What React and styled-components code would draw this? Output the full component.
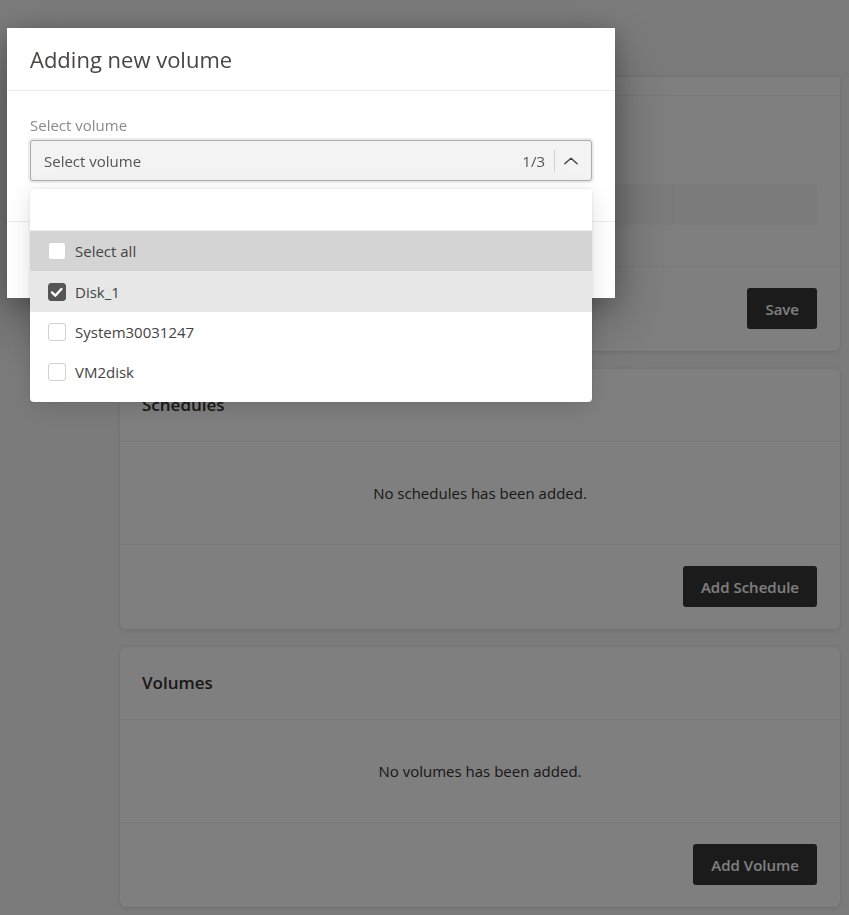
import React, { useState } from "react";
import styled, { createGlobalStyle } from "styled-components";

const GlobalStyle = createGlobalStyle`
  *, *::before, *::after { box-sizing: border-box; }
  body {
    margin: 0;
    background: #f6f6f6;
    color: #323130;
    font-family: "Segoe UI", "Open Sans", "Noto Sans", sans-serif;
    font-size: 15px;
    line-height: 20px;
  }
  button, input { font: inherit; color: inherit; }
`;

const TopBar = styled.header`
  height: 77px;
  border-bottom: 1px solid #ededed;
  background: #f6f6f6;
`;

const Content = styled.main`
  display: flex;
  flex-direction: column;
  gap: 18px;
  padding: 0 9px 7px 120px;
`;

const Card = styled.section`
  background: #fff;
  border-radius: ${(p) => (p.$scrolled ? "0 0 6px 6px" : "6px")};
  box-shadow: 0 1px 4px rgba(0, 0, 0, 0.12);
`;

const CardHeader = styled.div`
  min-height: ${(p) => (p.$scrolled ? "19px" : "73px")};
  display: flex;
  align-items: center;
  padding: 0 22px;
  border-bottom: 1px solid #f2f2f2;
`;

const CardTitle = styled.h2`
  margin: 0;
  font-size: 17px;
  line-height: 24px;
  font-weight: 600;
`;

const EmptyBody = styled.p`
  margin: 0;
  min-height: 102px;
  display: flex;
  align-items: center;
  justify-content: center;
`;

const FieldBody = styled.div`
  padding: 88px 23px 41px 22px;
`;

const DisabledField = styled.input`
  display: block;
  width: 100%;
  height: 41px;
  border: 0;
  border-radius: 4px;
  background: #f6f6f6;
`;

const CardFooter = styled.div`
  display: flex;
  justify-content: flex-end;
  padding: 21px 23px 22px;
  border-top: 1px solid #f2f2f2;
`;

const PrimaryButton = styled.button`
  height: 41px;
  padding: 0 18px;
  border: 0;
  border-radius: 3px;
  background: #363636;
  color: #fff;
  font-weight: 600;
`;

const Overlay = styled.div`
  position: fixed;
  inset: 0;
  padding: 28px 7px;
  background: rgba(0, 0, 0, 0.5);
`;

const Dialog = styled.div`
  max-width: 608px;
  background: #fff;
  box-shadow: 0 26px 58px rgba(0, 0, 0, 0.3), 0 5px 24px rgba(0, 0, 0, 0.24);
`;

const DialogHeader = styled.div`
  padding: 17px 23px;
  border-bottom: 1px solid #ededed;
`;

const DialogTitle = styled.h1`
  margin: 0;
  font-size: 22px;
  line-height: 28px;
  font-weight: 400;
  color: #484644;
`;

const DialogBody = styled.div`
  padding: 24px 23px 40px;
`;

const DialogFooter = styled.div`
  height: 77px;
  border-top: 1px solid #ededed;
`;

const FieldLabel = styled.div`
  padding-bottom: 5px;
  color: #8a8a8a;
`;

const Picker = styled.div`
  position: relative;
`;

const PickerButton = styled.button`
  display: flex;
  align-items: center;
  width: 100%;
  height: 41px;
  padding: 0 13px;
  border: 1px solid #adadad;
  border-radius: 3px;
  background: #f3f3f3;
  box-shadow: 0 0 0 2px rgba(0, 0, 0, 0.08);
  color: #555;
  text-align: left;
`;

const PickerText = styled.span`
  flex: 1;
`;

const PickerArrow = styled.span`
  display: flex;
  align-items: center;
  height: 22px;
  margin-left: 9px;
  padding-left: 9px;
  border-left: 1px solid #d0d0d0;
  color: #3d3d3d;
`;

const Menu = styled.div`
  position: absolute;
  top: calc(100% + 8px);
  left: 0;
  right: 0;
  padding-bottom: 10px;
  overflow: hidden;
  border-radius: 4px;
  background: #fff;
  box-shadow: 0 6px 24px rgba(0, 0, 0, 0.12), 0 0 3px rgba(0, 0, 0, 0.1);
`;

const SearchInput = styled.input`
  display: block;
  width: 100%;
  height: 42px;
  padding: 0 14px;
  border: 0;
  border-bottom: 1px solid #ededed;
  background: #fff;
  outline: 0;
`;

const optionColor = (p) => {
  if (p.$highlighted) return "#d4d4d4";
  return p.$selected ? "#e7e7e7" : "#fff";
};

const Option = styled.label`
  display: flex;
  align-items: center;
  gap: 9px;
  min-height: ${(p) => (p.$selected ? "41px" : "40px")};
  padding: 0 18px;
  color: #444;
  background: ${optionColor};
`;

const CheckHolder = styled.span`
  display: grid;
  width: 18px;
  height: 18px;
  > * {
    grid-area: 1 / 1;
  }
`;

const Checkbox = styled.input`
  appearance: none;
  width: 18px;
  height: 18px;
  margin: 0;
  border: 1px solid #d2d2d2;
  border-radius: 3px;
  background: #fff;
  &:checked {
    border-color: #555;
    background: #555;
  }
`;

const CheckMark = styled.svg`
  pointer-events: none;
`;

function VolumeOption({ name, checked, highlighted, onToggle }) {
  return (
    <Option $highlighted={highlighted} $selected={checked}>
      <CheckHolder>
        <Checkbox type="checkbox" checked={checked} onChange={onToggle} />
        {checked && (
          <CheckMark width="18" height="18" viewBox="0 0 18 18" fill="none" aria-hidden="true">
            <path d="M4 9.4l3.3 3.3L13.4 6" stroke="#fff" strokeWidth="2.4" strokeLinecap="round" strokeLinejoin="round" />
          </CheckMark>
        )}
      </CheckHolder>
      {name}
    </Option>
  );
}

function EmptyCard({ title, message, action }) {
  return (
    <Card>
      <CardHeader>
        <CardTitle>{title}</CardTitle>
      </CardHeader>
      <EmptyBody>{message}</EmptyBody>
      <CardFooter>
        <PrimaryButton type="button">{action}</PrimaryButton>
      </CardFooter>
    </Card>
  );
}

const volumes = ["Disk_1", "System30031247", "VM2disk"];

export default function App() {
  const [selected, setSelected] = useState(["Disk_1"]);
  const [open, setOpen] = useState(true);
  const all = selected.length === volumes.length;
  const toggle = (name) =>
    setSelected((list) => (list.includes(name) ? list.filter((n) => n !== name) : [...list, name]));

  return (
    <>
      <GlobalStyle />
      <TopBar />
      <Content>
        <Card $scrolled>
          <CardHeader $scrolled />
          <FieldBody>
            <DisabledField disabled aria-label="Name" />
          </FieldBody>
          <CardFooter>
            <PrimaryButton type="button">Save</PrimaryButton>
          </CardFooter>
        </Card>
        <EmptyCard title="Schedules" message="No schedules has been added." action="Add Schedule" />
        <EmptyCard title="Volumes" message="No volumes has been added." action="Add Volume" />
      </Content>
      <Overlay>
        <Dialog role="dialog" aria-modal="true" aria-labelledby="dialog-title">
          <DialogHeader>
            <DialogTitle id="dialog-title">Adding new volume</DialogTitle>
          </DialogHeader>
          <DialogBody>
            <FieldLabel id="volume-label">Select volume</FieldLabel>
            <Picker>
              <PickerButton
                type="button"
                aria-labelledby="volume-label"
                aria-expanded={open}
                onClick={() => setOpen(!open)}
              >
                <PickerText>Select volume</PickerText>
                {selected.length}/{volumes.length}
                <PickerArrow>
                  <svg width="14" height="14" viewBox="0 0 14 14" fill="none" aria-hidden="true">
                    <path d="M0.8 9.8L7 4.2l6.2 5.6" stroke="currentColor" strokeWidth="1.3" strokeLinecap="round" strokeLinejoin="round" />
                  </svg>
                </PickerArrow>
              </PickerButton>
              {open && (
                <Menu>
                  <SearchInput type="text" aria-label="Search volumes" />
                  <VolumeOption
                    name="Select all"
                    highlighted
                    checked={all}
                    onToggle={() => setSelected(all ? [] : volumes)}
                  />
                  {volumes.map((name) => (
                    <VolumeOption
                      key={name}
                      name={name}
                      checked={selected.includes(name)}
                      onToggle={() => toggle(name)}
                    />
                  ))}
                </Menu>
              )}
            </Picker>
          </DialogBody>
          <DialogFooter />
        </Dialog>
      </Overlay>
    </>
  );
}
